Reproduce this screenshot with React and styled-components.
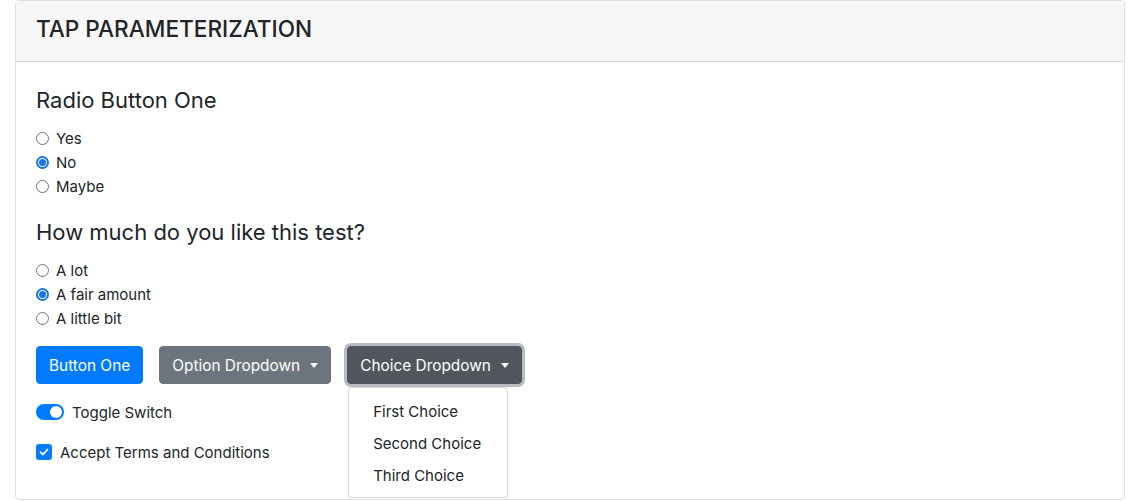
import React, { useState } from "react";
import styled, { createGlobalStyle } from "styled-components";

const GlobalStyle = createGlobalStyle`
  body {
    margin: 0;
    font-family: Inter, "Liberation Sans", sans-serif;
    color: #212529;
    background: #fff;
  }
  * { box-sizing: border-box; }
`;

const Page = styled.div`
  padding: 0 15px;
  width: 1140px;
`;

const Card = styled.div`
  border: 1px solid rgba(0, 0, 0, 0.125);
  border-radius: 4px;
  height: 500px;
  display: flex;
  flex-direction: column;
`;

const CardHeader = styled.div`
  height: 61px;
  background: #f7f7f7;
  border-bottom: 1px solid rgba(0, 0, 0, 0.125);
  display: flex;
  align-items: center;
  padding: 0 20px;
  & h5 {
    margin: 0 0 6px;
    font-size: 22.6px;
    font-weight: 500;
  }
`;

const CardBody = styled.div`
  padding: 22px 20px 0;
`;

const Heading = styled.h4`
  margin: 0 0 10px;
  font-size: 22px;
  font-weight: 400;
  line-height: 32px;
`;

const Group = styled.div`
  margin-bottom: 18px;
`;

const RadioRow = styled.label`
  display: flex;
  align-items: center;
  height: 24px;
  font-size: 15px;
  gap: 7px;
`;

const Radio = styled.span`
  width: 13px;
  height: 13px;
  border-radius: 50%;
  border: ${(p) => (p.checked ? "2px solid #1a73e8" : "1px solid #767676")};
  display: inline-flex;
  align-items: center;
  justify-content: center;
  background: #fff;
  &::after {
    content: "";
    width: 7px;
    height: 7px;
    border-radius: 50%;
    background: ${(p) => (p.checked ? "#1a73e8" : "transparent")};
  }
`;

const ButtonRow = styled.div`
  display: flex;
  gap: 16px;
  align-items: flex-start;
  margin-top: -2px;
`;

const Button = styled.button`
  height: 38px;
  padding: 0 12px;
  font-family: inherit;
  font-size: 15.4px;
  color: #fff;
  border-radius: 4px;
  border: 1px solid ${(p) => p.bg};
  background: ${(p) => p.bg};
  display: inline-flex;
  align-items: center;
  gap: 6px;
  ${(p) => p.focused && "box-shadow: 0 0 0 3px rgba(160,166,172,.75);"}
`;

const Caret = styled.span`
  width: 0;
  height: 0;
  border-left: 4px solid transparent;
  border-right: 4px solid transparent;
  border-top: 5px solid #fff;
  margin-left: 4px;
`;

const DropWrap = styled.div`
  position: relative;
`;

const Menu = styled.div`
  position: absolute;
  top: 41px;
  left: 1px;
  width: 160px;
  background: #fff;
  border: 1px solid rgba(0, 0, 0, 0.15);
  border-radius: 4px;
  padding: 7px 0 6px;
  z-index: 2;
`;

const MenuItem = styled.div`
  height: 32px;
  display: flex;
  align-items: center;
  padding: 0 24px;
  font-size: 15px;
`;

const Controls = styled.div`
  display: flex;
  flex-direction: column;
  gap: 16px;
  margin-top: 16px;
`;

const SwitchRow = styled.label`
  display: flex;
  align-items: center;
  gap: 8px;
  font-size: 15px;
  height: 24px;
`;

const Switch = styled.span`
  width: 28px;
  height: 16px;
  border-radius: 8px;
  background: #007bff;
  display: inline-flex;
  align-items: center;
  justify-content: flex-end;
  padding: 0 2px;
  &::after {
    content: "";
    width: 12px;
    height: 12px;
    border-radius: 50%;
    background: #fff;
  }
`;

const Check = styled.span`
  width: 16px;
  height: 16px;
  border-radius: 3px;
  background: #007bff;
  display: inline-flex;
  align-items: center;
  justify-content: center;
`;

const App = () => {
  const [one] = useState("No");
  const [like] = useState("A fair amount");
  const radios = (opts, val) =>
    opts.map((o) => (
      <RadioRow key={o}>
        <Radio checked={o === val} />
        {o}
      </RadioRow>
    ));

  return (
    <Page>
      <GlobalStyle />
      <Card>
        <CardHeader>
          <h5>TAP PARAMETERIZATION</h5>
        </CardHeader>
        <CardBody>
          <Group>
            <Heading>Radio Button One</Heading>
            {radios(["Yes", "No", "Maybe"], one)}
          </Group>
          <Group>
            <Heading>How much do you like this test?</Heading>
            {radios(["A lot", "A fair amount", "A little bit"], like)}
          </Group>
          <ButtonRow>
            <Button bg="#007bff">Button One</Button>
            <Button bg="#6c757d">
              Option Dropdown <Caret />
            </Button>
            <DropWrap>
              <Button bg="#50565c" focused>
                Choice Dropdown <Caret />
              </Button>
              <Menu>
                <MenuItem>First Choice</MenuItem>
                <MenuItem>Second Choice</MenuItem>
                <MenuItem>Third Choice</MenuItem>
              </Menu>
            </DropWrap>
          </ButtonRow>
          <Controls>
            <SwitchRow>
              <Switch />
              Toggle Switch
            </SwitchRow>
            <SwitchRow>
              <Check>
                <svg width="10" height="8" viewBox="0 0 10 8">
                  <path d="M1.5 4.2 L4 6.5 L8.5 1.5" stroke="#fff" strokeWidth="1.8" fill="none" strokeLinecap="round" strokeLinejoin="round" />
                </svg>
              </Check>
              Accept Terms and Conditions
            </SwitchRow>
          </Controls>
        </CardBody>
      </Card>
    </Page>
  );
};

export default App;
